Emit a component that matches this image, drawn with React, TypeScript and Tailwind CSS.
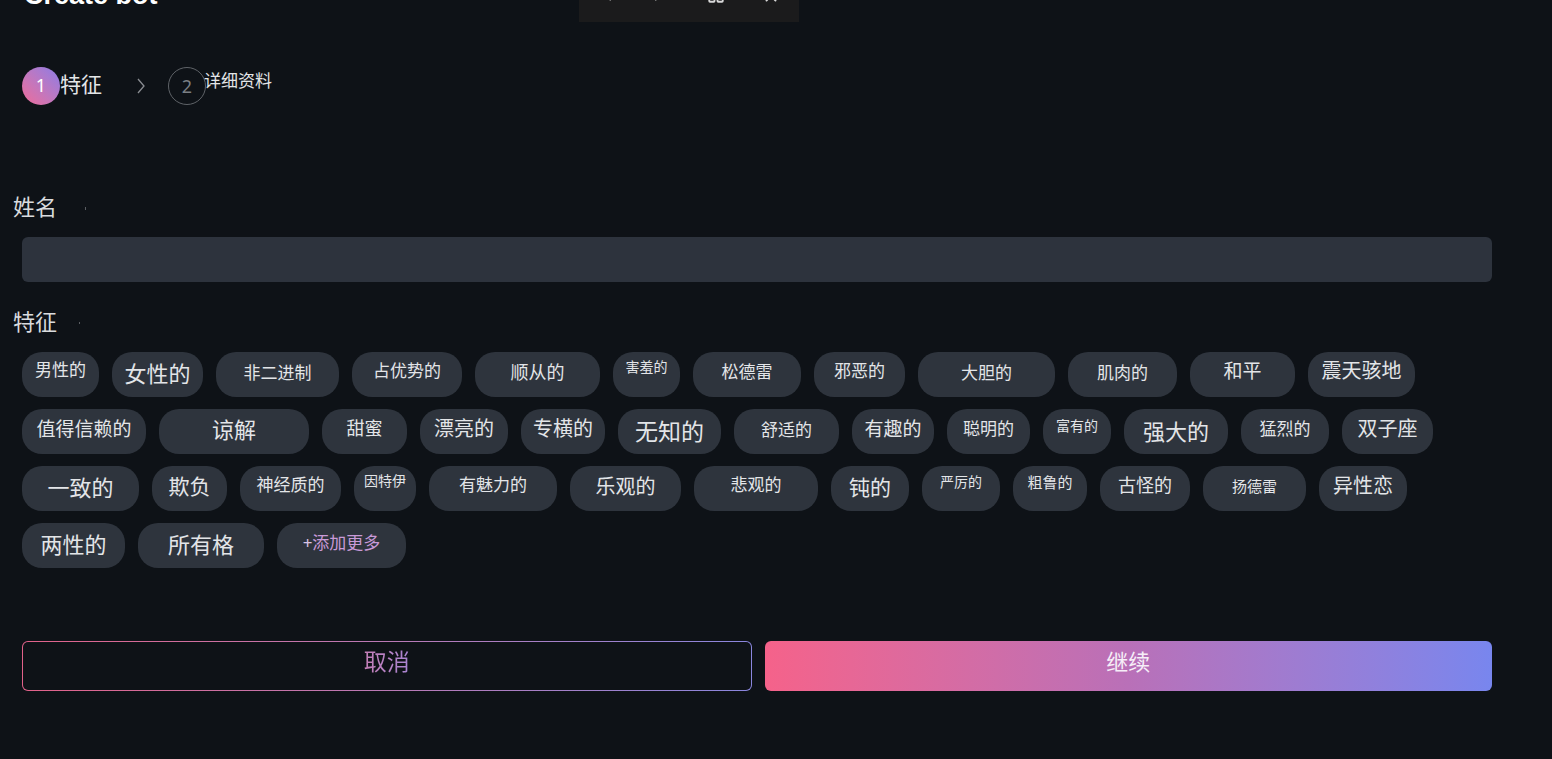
import React from "react";
import { ChevronLeft, ChevronRight, X, LayoutGrid } from "lucide-react";

type Chip = { t: string; c: string };

const chips: Chip[] = [
  { t: "男性的", c: "w-[77px] text-[17px] pb-[7px]" },
  { t: "女性的", c: "w-[91px] text-[22px]" },
  { t: "非二进制", c: "w-[123px] text-[17px] pb-[1px]" },
  { t: "占优势的", c: "w-[110px] text-[17px] pb-[5px]" },
  { t: "顺从的", c: "w-[125px] text-[18px] pb-[1px]" },
  { t: "害羞的", c: "w-[67px] text-[14px] pb-[12px]" },
  { t: "松德雷", c: "w-[108px] text-[17px] pb-[3px]" },
  { t: "邪恶的", c: "w-[91px] text-[17px] pb-[5px]" },
  { t: "大胆的", c: "w-[137px] text-[17px] pb-[1px]" },
  { t: "肌肉的", c: "w-[109px] text-[17px] pb-[1px]" },
  { t: "和平", c: "w-[105px] text-[19px] pb-[3px]" },
  { t: "震天骇地", c: "w-[107px] text-[20px] pb-[3px]" },

  { t: "值得信赖的", c: "w-[124px] text-[19px] pb-[1px]" },
  { t: "谅解", c: "w-[150px] text-[22px] pb-[1px]" },
  { t: "甜蜜", c: "w-[85px] text-[18px] pb-[3px]" },
  { t: "漂亮的", c: "w-[88px] text-[20px] pb-[1px]" },
  { t: "专横的", c: "w-[84px] text-[20px] pb-[1px]" },
  { t: "无知的", c: "w-[103px] text-[23px] pt-[3px]" },
  { t: "舒适的", c: "w-[105px] text-[17px] pb-[1px]" },
  { t: "有趣的", c: "w-[82px] text-[19px] pb-[1px]" },
  { t: "聪明的", c: "w-[83px] text-[17px] pb-[3px]" },
  { t: "富有的", c: "w-[68px] text-[14px] pb-[7px]" },
  { t: "强大的", c: "w-[104px] text-[22px] pt-[3px]" },
  { t: "猛烈的", c: "w-[88px] text-[17px] pb-[3px]" },
  { t: "双子座", c: "w-[91px] text-[20px] pb-[1px]" },

  { t: "一致的", c: "w-[117px] text-[22px] pt-[1px]" },
  { t: "欺负", c: "w-[75px] text-[21px]" },
  { t: "神经质的", c: "w-[101px] text-[17px] pb-[5px]" },
  { t: "因特伊", c: "w-[62px] text-[14px] pb-[11px]" },
  { t: "有魅力的", c: "w-[128px] text-[17px] pb-[5px]" },
  { t: "乐观的", c: "w-[111px] text-[20px]" },
  { t: "悲观的", c: "w-[124px] text-[17px] pb-[5px]" },
  { t: "钝的", c: "w-[78px] text-[21px] pt-[1px]" },
  { t: "严厉的", c: "w-[78px] text-[14px] pb-[9px]" },
  { t: "粗鲁的", c: "w-[74px] text-[15px] pb-[9px]" },
  { t: "古怪的", c: "w-[90px] text-[18px] pb-[3px]" },
  { t: "扬德雷", c: "w-[103px] text-[15px] pb-[1px]" },
  { t: "异性恋", c: "w-[88px] text-[20px] pb-[1px]" },

  { t: "两性的", c: "w-[103px] text-[22px] pt-[1px]" },
  { t: "所有格", c: "w-[126px] text-[22px]" },
];

export default function App() {
  return (
    <div
      className="min-h-[759px] w-full bg-[#0e1217] text-[#e3e5e8] overflow-hidden relative"
      style={{ fontFamily: '"Noto Sans", "Noto Sans CJK SC", sans-serif' }}
    >
      {/* floating toolbar */}
      <div className="absolute left-[579px] top-0 w-[220px] h-[22px] bg-[#1b1b1c] overflow-hidden">
        <ChevronLeft className="absolute left-[20px] top-[-14px] w-[18px] h-[18px] text-[#d8d8d8]" strokeWidth={2.5} />
        <ChevronRight className="absolute left-[70px] top-[-14px] w-[18px] h-[18px] text-[#d8d8d8]" strokeWidth={2.5} />
        <LayoutGrid className="absolute left-[128px] top-[-14px] w-[18px] h-[18px] text-[#d8d8d8]" strokeWidth={2.5} />
        <X className="absolute left-[183px] top-[-13px] w-[18px] h-[18px] text-[#d8d8d8]" strokeWidth={2.5} />
      </div>

      {/* title (scrolled mostly out of view) */}
      <div className="h-[6px] overflow-hidden">
        <div
          className="mt-[-21px] ml-[24px] text-[27px] leading-[32px] font-bold text-white"
          style={{ fontFamily: '"Liberation Sans", sans-serif' }}
        >
          Create bot
        </div>
      </div>

      {/* stepper */}
      <div className="mt-[61px] ml-[22px] flex items-center h-[38px]">
        <div className="w-[38px] h-[38px] rounded-full bg-gradient-to-tr from-[#ef6a98] to-[#8a7be6] flex items-center justify-center text-white text-[18px] leading-none pb-[2px]">
          1
        </div>
        <div className="text-[21px] leading-none text-[#e4e6e8] mb-[4px]">特征</div>
        <svg className="ml-[33px] w-[12px] h-[18px]" viewBox="0 0 12 18" fill="none">
          <path d="M3 2 L9 9 L3 16" stroke="#8a8d92" strokeWidth="1.3" />
        </svg>
        <div className="ml-[21px] w-[38px] h-[38px] rounded-full border border-[#5f6368] flex items-center justify-center text-[#7b7f84] text-[18px] leading-none">
          2
        </div>
        <div className="text-[17px] leading-none text-[#e4e6e8] mb-[12px] ml-[-2px]">详细资料</div>
      </div>

      {/* name */}
      <div className="mt-[90px] ml-[13px] flex items-center h-[26px]">
        <span className="text-[22px] leading-none text-[#d9dbde] mb-[4px]">姓名</span>
        <span className="ml-[28px] w-[1px] h-[3px] bg-[#5a5d62]" />
      </div>
      <div className="mt-[16px] ml-[22px] w-[1470px] h-[45px] rounded-[6px] bg-[#2d333d]" />

      {/* traits */}
      <div className="mt-[28px] ml-[13px] flex items-center h-[26px]">
        <span className="text-[22px] leading-none text-[#d9dbde] mb-[4px]">特征</span>
        <span className="ml-[22px] w-[1px] h-[2px] bg-[#5a5d62]" />
      </div>
      <div className="mt-[16px] ml-[22px] w-[1470px] flex flex-wrap gap-x-[13px] gap-y-[12px]">
        {chips.map((c) => (
          <div
            key={c.t}
            className={
              "h-[45px] rounded-[20px] bg-[#2e343d] text-[#e3e5e8] flex items-center justify-center leading-none shrink-0 " +
              c.c
            }
          >
            <span className="mb-[4px]">{c.t}</span>
          </div>
        ))}
        <div className="h-[45px] w-[129px] rounded-[20px] bg-[#2e343d] flex items-center justify-center leading-none shrink-0 text-[17px] pb-[3px]">
          <span className="mb-[4px] flex">
            <span className="text-[#d9c4e4]">+</span>
            <span className="text-[#c99ad8]">添加更多</span>
          </span>
        </div>
      </div>

      {/* buttons */}
      <div className="mt-[73px] ml-[22px] w-[1470px] flex gap-[13px]">
        <div className="flex-1 h-[50px] rounded-[6px] p-[1px] bg-gradient-to-r from-[#e2628a] to-[#8a86de]">
          <div className="w-full h-full rounded-[5px] bg-[#0e1217] flex items-center justify-center">
            <span className="text-[23px] leading-none bg-gradient-to-r from-[#c47fb7] to-[#a884d2] bg-clip-text text-transparent mb-[9px]">
              取消
            </span>
          </div>
        </div>
        <div className="flex-1 h-[50px] rounded-[6px] bg-gradient-to-r from-[#f5628a] via-[#b970b8] to-[#7886ee] flex items-center justify-center">
          <span className="text-[22px] leading-none text-[#f6eef8] mb-[11px]">继续</span>
        </div>
      </div>
    </div>
  );
}
